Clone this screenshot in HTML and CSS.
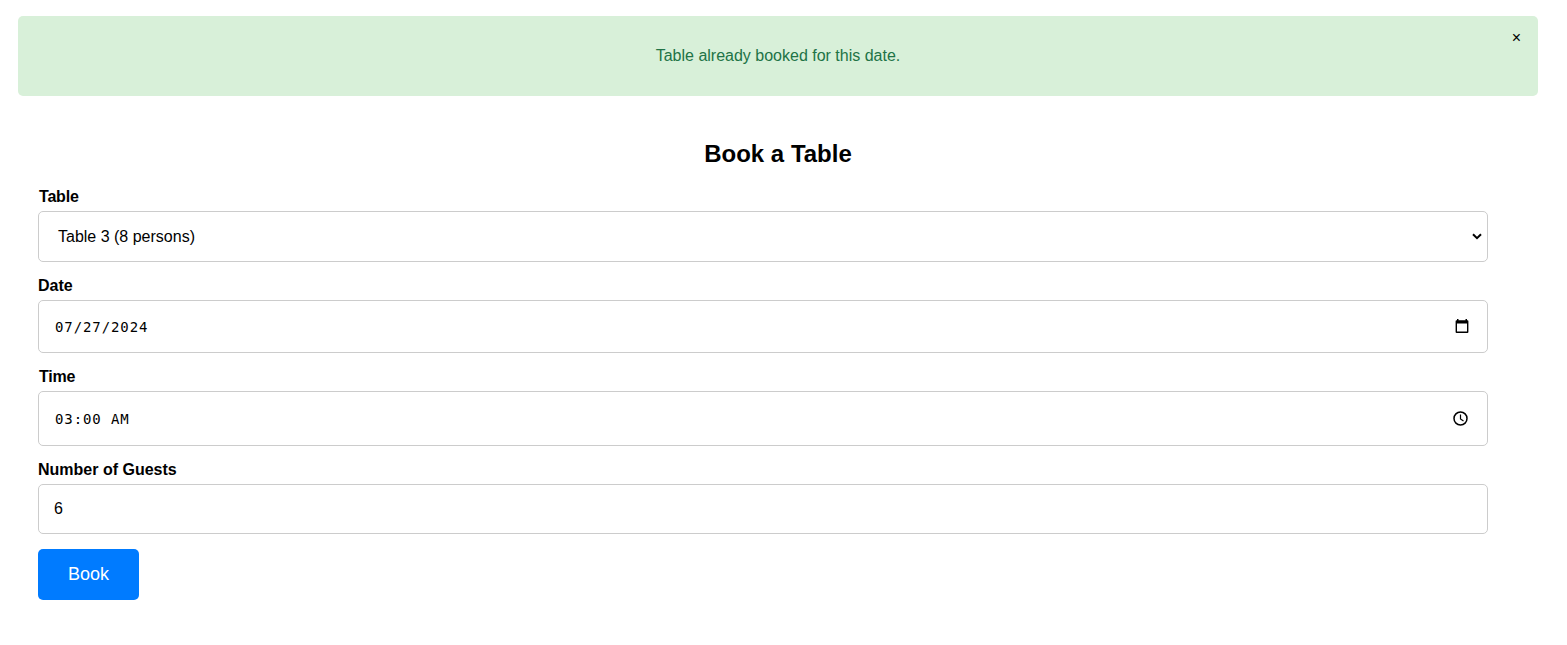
FILE: index.html
```html
<!DOCTYPE html>
<html lang="en">
<head>
<meta charset="utf-8">
<title>Book a Table</title>
<link rel="stylesheet" href="styles.css">
</head>
<body>
<main class="page">
  <div class="alert" role="alert">
    <span class="alert-text">Table already booked for this date.</span>
    <span class="alert-close" role="button" aria-label="Close">×</span>
  </div>
  <form class="booking">
    <h2 class="title">Book a Table</h2>
    <div class="label label-t">Table</div>
    <div class="field field-table">
      <span class="value">Table 3 (8 persons)</span>
      <svg class="chevron" width="10" height="8" viewBox="0 0 10 8"><path d="M1 1.2 L5 5.2 L9 1.2" fill="none" stroke="#000" stroke-width="2"/></svg>
    </div>
    <div class="label">Date</div>
    <div class="field field-date">
      <span class="value mono">07/27/2024</span>
      <svg class="calendar" width="14" height="15" viewBox="0 0 14 15"><path d="M2 0h1.5v1.3h7V0H12v1.3h.5Q13.4 1.3 13.4 2.3v10.7q0 1-1 1h-10.8q-1 0-1-1v-10.7Q.6 1.3 1.6 1.3H2zM2 4.5v8.1h10V4.5z" fill="#000" fill-rule="evenodd"/></svg>
    </div>
    <div class="label label-t">Time</div>
    <div class="field field-time">
      <span class="value mono">03:00 AM</span>
      <svg class="clock" width="16" height="16" viewBox="0 0 16 16" fill="none" stroke="#000"><circle cx="7.5" cy="7.5" r="6.5" stroke-width="1.5"/><path d="M7.5 3.5v4.4l3 2" stroke-width="1.2"/></svg>
    </div>
    <div class="label">Number of Guests</div>
    <div class="field field-guests"><span class="value">6</span></div>
    <button class="submit" type="button">Book</button>
  </form>
</main>
</body>
</html>
```
FILE: styles.css
```css
* { box-sizing: border-box; }

body {
  margin: 0;
  background: #fff;
  color: #000;
  font: 16px/18px "Liberation Sans", Arial, sans-serif;
}

.page { padding: 16px 29px 0 18px; }

.alert {
  position: relative;
  display: flex;
  align-items: center;
  justify-content: center;
  height: 80px;
  border-radius: 5px;
  background: #d8f0d9;
  color: #217346;
}

.alert-close {
  position: absolute;
  top: 13px;
  right: 17px;
  color: #000;
  font-size: 16px;
}

.booking {
  display: flex;
  flex-direction: column;
  align-items: flex-start;
  padding: 44px 20px 0;
}

.title {
  align-self: center;
  margin: 0 0 20px;
  font-size: 24px;
  line-height: 28px;
}

.label {
  height: 18px;
  margin-bottom: 5px;
  font-weight: bold;
}

.label-t {
  padding-left: 1px;
  letter-spacing: -0.2px;
}

.field {
  display: flex;
  align-items: center;
  justify-content: space-between;
  width: 1450px;
  margin-bottom: 15px;
  padding-left: 15px;
  border: 1px solid #ccc;
  border-radius: 5px;
}

.field-table { height: 51px; padding: 0 5px 0 19px; }
.field-date { height: 53px; padding-right: 18px; }
.field-time { height: 55px; padding-right: 18px; }
.field-guests { height: 50px; }

.mono {
  padding: 1px 0 0 1px;
  font-family: "DejaVu Sans Mono", monospace;
  font-size: 14px;
  letter-spacing: 0.9px;
}

.submit {
  width: 101px;
  height: 51px;
  padding: 0 0 2px;
  border: 0;
  border-radius: 5px;
  background: #007bff;
  color: #fff;
  font: 18px/20px "Liberation Sans", Arial, sans-serif;
}
```
